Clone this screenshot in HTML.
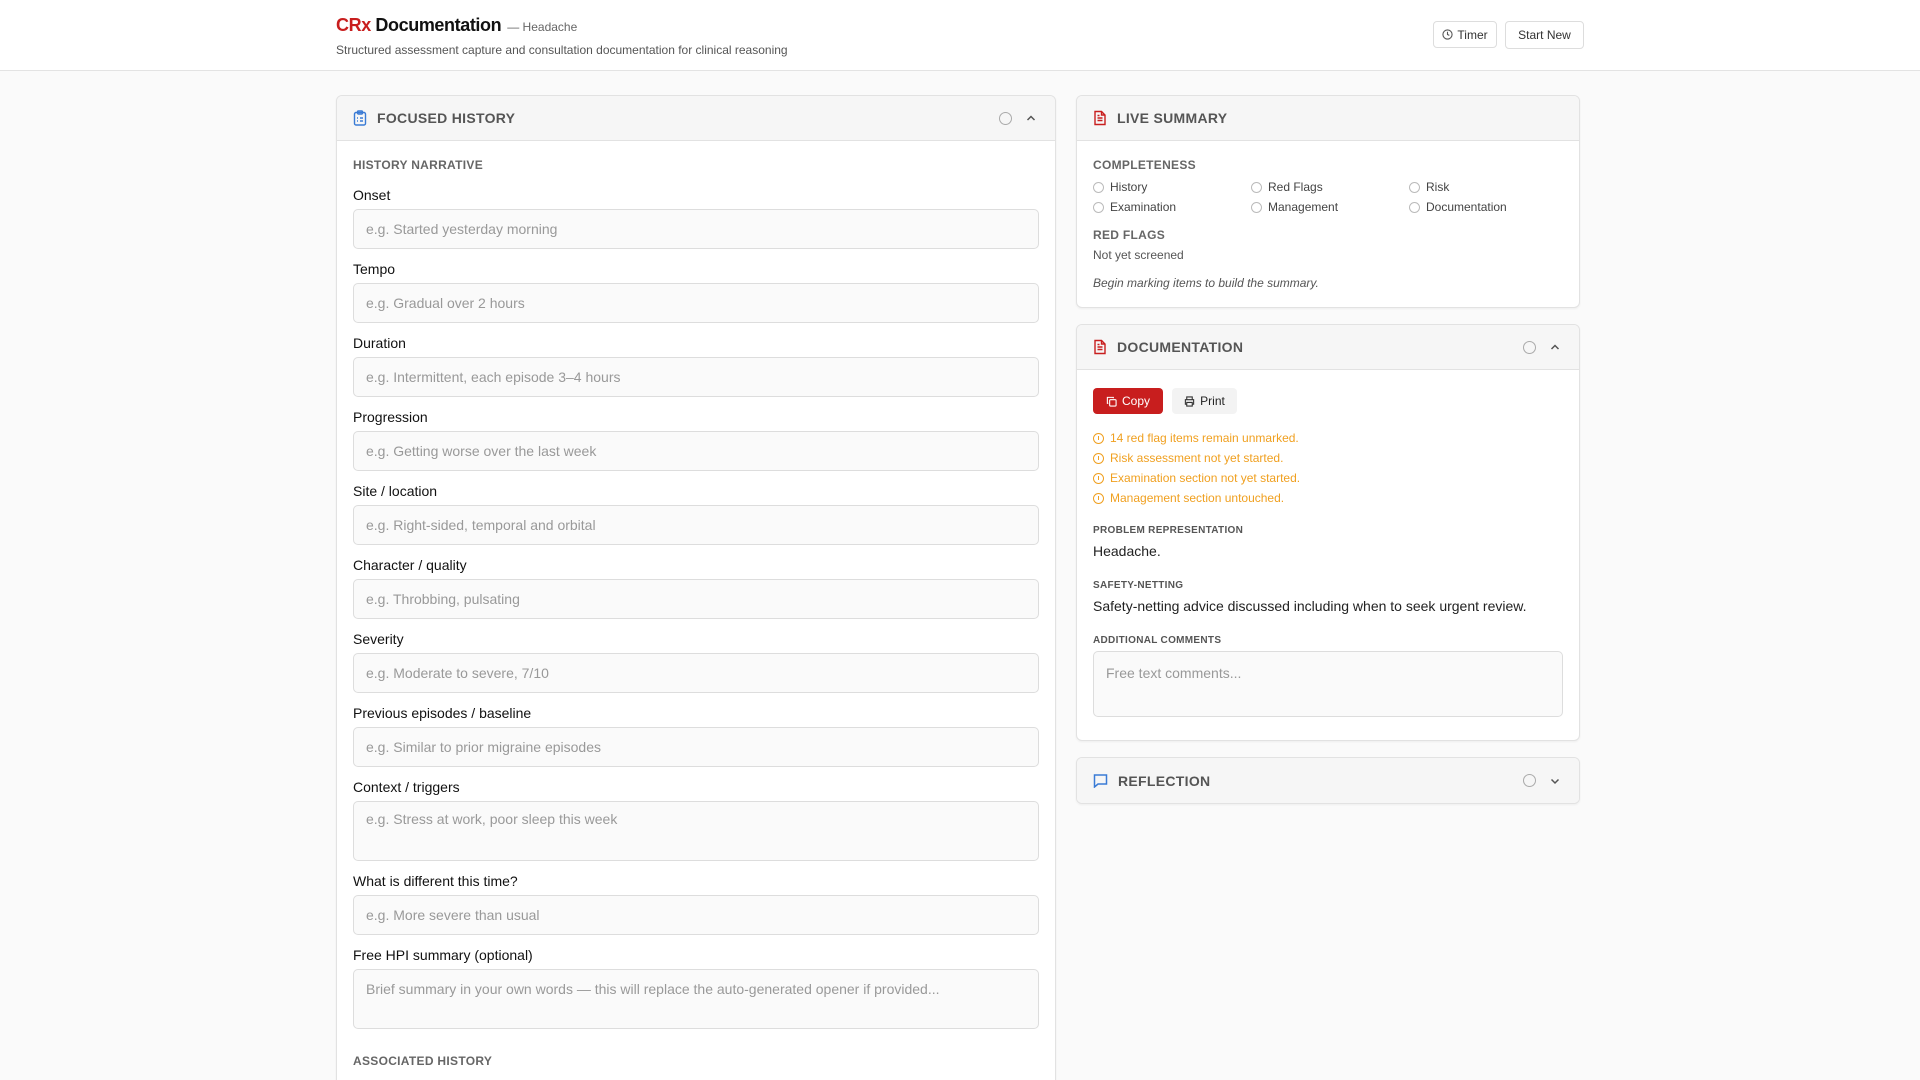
<!DOCTYPE html>
<html><head><meta charset="utf-8"><style>
*{box-sizing:border-box;margin:0;padding:0}
html{width:1920px;height:1080px;overflow:hidden}
body{width:1920px;height:1080px;overflow:hidden;background:#fafafa;font-family:"Liberation Sans",Arial,sans-serif;color:#111;position:relative}
.hdr{position:absolute;left:0;top:0;width:1920px;height:71px;background:#fff;border-bottom:1px solid #e3e3e3}
.abs{position:absolute}
.title{left:336px;top:15px;font-size:18px;font-weight:bold;letter-spacing:-0.4px}
.title .r{color:#c81e1e}
.title .h{font-size:12px;font-weight:normal;color:#666;margin-left:6px;letter-spacing:0}
.sub{left:336px;top:43px;font-size:12px;color:#555}
.btn{position:absolute;border:1px solid #ddd;border-radius:4px;background:#fff;font-size:12px;color:#333;display:flex;align-items:center;justify-content:center;gap:4px}
.card{position:absolute;background:#fff;border:1px solid #e2e2e2;border-radius:6px;overflow:hidden;box-shadow:0 1px 2px rgba(0,0,0,.05)}
.ch{height:45px;background:#f6f6f6;border-bottom:1px solid #e2e2e2;display:flex;align-items:center;padding:0 16px;font-size:14px;font-weight:bold;color:#555;letter-spacing:.3px}
.ch svg{margin-right:10px}
.ch .rt{margin-left:auto;display:flex;align-items:center;gap:13px;margin-right:2px}
.ch .rt svg{margin-right:0}
.circ{width:13px;height:13px;border:1.5px solid #aaa;border-radius:50%}
.sec{font-size:12px;font-weight:bold;color:#666;letter-spacing:.3px}
.lbl{font-size:14px;color:#111}
.inp{position:absolute;left:16px;width:686px;height:40px;border:1px solid #ddd;border-radius:5px;background:#fafafa;font-size:14px;color:#999;padding:11px 12px}
.ta{padding-top:9px}
.ck{display:flex;align-items:center;gap:6px;font-size:12px;color:#444;position:absolute}
.ck i{width:11px;height:11px;border:1px solid #bbb;border-radius:50%;display:inline-block}
.w{position:absolute;left:16px;font-size:12px;color:#f0a020;display:flex;align-items:center;gap:6px}
.w i{width:11px;height:11px;border:1.3px solid #f0a020;border-radius:50%;display:inline-block;position:relative}
.w i:after{content:"";position:absolute;left:3.5px;top:2px;width:1.3px;height:4px;background:#f0a020}
.sl{font-size:10px;font-weight:bold;color:#555;letter-spacing:.3px}
</style></head><body>
<div class="hdr">
<div class="abs title"><span class="r">CRx</span> Documentation<span class="h">— Headache</span></div>
<div class="abs sub">Structured assessment capture and consultation documentation for clinical reasoning</div>
<div class="btn" style="left:1433px;top:21px;width:64px;height:27px"><svg width="11" height="11" viewBox="0 0 12 12"><circle cx="6" cy="6" r="5" fill="none" stroke="#555" stroke-width="1.2"/><path d="M6 3v3l2 1" stroke="#555" fill="none" stroke-width="1.2"/></svg>Timer</div>
<div class="btn" style="left:1505px;top:21px;width:79px;height:28px">Start New</div>
</div>

<div class="card" style="left:336px;top:95px;width:720px;height:995px;border-bottom-left-radius:0;border-bottom-right-radius:0">
<div class="ch"><svg width="14" height="16" viewBox="0 0 14 16" fill="none" stroke="#3a7bd5" stroke-width="1.4"><rect x="1.5" y="2.5" width="11" height="12.5" rx="1.5"/><rect x="4.5" y="1" width="5" height="3" rx="1"/><path d="M4 8h1M7 8h3M4 11h1M7 11h3"/></svg>FOCUSED HISTORY<div class="rt"><span class="circ"></span><svg width="12" height="12" viewBox="0 0 12 12"><path d="M2.5 8l3.5-3.5L9.5 8" fill="none" stroke="#555" stroke-width="1.5"/></svg></div></div>
<div class="abs sec" style="left:16px;top:62px">HISTORY NARRATIVE</div>
<div class="abs lbl" style="left:16px;top:91px">Onset</div><div class="inp" style="top:113px">e.g. Started yesterday morning</div>
<div class="abs lbl" style="left:16px;top:165px">Tempo</div><div class="inp" style="top:187px">e.g. Gradual over 2 hours</div>
<div class="abs lbl" style="left:16px;top:239px">Duration</div><div class="inp" style="top:261px">e.g. Intermittent, each episode 3–4 hours</div>
<div class="abs lbl" style="left:16px;top:313px">Progression</div><div class="inp" style="top:335px">e.g. Getting worse over the last week</div>
<div class="abs lbl" style="left:16px;top:387px">Site / location</div><div class="inp" style="top:409px">e.g. Right-sided, temporal and orbital</div>
<div class="abs lbl" style="left:16px;top:461px">Character / quality</div><div class="inp" style="top:483px">e.g. Throbbing, pulsating</div>
<div class="abs lbl" style="left:16px;top:535px">Severity</div><div class="inp" style="top:557px">e.g. Moderate to severe, 7/10</div>
<div class="abs lbl" style="left:16px;top:609px">Previous episodes / baseline</div><div class="inp" style="top:631px">e.g. Similar to prior migraine episodes</div>
<div class="abs lbl" style="left:16px;top:683px">Context / triggers</div><div class="inp ta" style="top:705px;height:60px">e.g. Stress at work, poor sleep this week</div>
<div class="abs lbl" style="left:16px;top:777px">What is different this time?</div><div class="inp" style="top:799px">e.g. More severe than usual</div>
<div class="abs lbl" style="left:16px;top:851px">Free HPI summary (optional)</div><div class="inp ta" style="top:873px;height:60px;padding-top:11px">Brief summary in your own words — this will replace the auto-generated opener if provided...</div>
<div class="abs sec" style="left:16px;top:958px">ASSOCIATED HISTORY</div>
</div>

<div class="card" style="left:1076px;top:95px;width:504px;height:213px">
<div class="ch"><svg width="14" height="16" viewBox="0 0 14 16" fill="none" stroke="#c81e1e" stroke-width="1.4"><path d="M2 1.5h6.5l3.5 3.5v9.5H2z"/><path d="M8.5 1.5V5H12M4.5 8h5M4.5 10.5h5M4.5 5.5h2"/></svg>LIVE SUMMARY</div>
<div class="abs sec" style="left:16px;top:62px">COMPLETENESS</div>
<div class="ck" style="left:16px;top:84px"><i></i>History</div><div class="ck" style="left:174px;top:84px"><i></i>Red Flags</div><div class="ck" style="left:332px;top:84px"><i></i>Risk</div>
<div class="ck" style="left:16px;top:104px"><i></i>Examination</div><div class="ck" style="left:174px;top:104px"><i></i>Management</div><div class="ck" style="left:332px;top:104px"><i></i>Documentation</div>
<div class="abs sec" style="left:16px;top:132px">RED FLAGS</div>
<div class="abs" style="left:16px;top:152px;font-size:12px;color:#555">Not yet screened</div>
<div class="abs" style="left:16px;top:180px;font-size:12px;color:#555;font-style:italic">Begin marking items to build the summary.</div>
</div>

<div class="card" style="left:1076px;top:324px;width:504px;height:417px">
<div class="ch"><svg width="14" height="16" viewBox="0 0 14 16" fill="none" stroke="#c81e1e" stroke-width="1.4"><path d="M2 1.5h6.5l3.5 3.5v9.5H2z"/><path d="M8.5 1.5V5H12M4.5 8h5M4.5 10.5h5M4.5 5.5h2"/></svg>DOCUMENTATION<div class="rt"><span class="circ"></span><svg width="12" height="12" viewBox="0 0 12 12"><path d="M2.5 8l3.5-3.5L9.5 8" fill="none" stroke="#555" stroke-width="1.5"/></svg></div></div>
<div class="abs" style="left:16px;top:63px;width:70px;height:26px;background:#c81e1e;border-radius:4px;color:#fff;font-size:12px;display:flex;align-items:center;justify-content:center;gap:5px"><svg width="11" height="11" viewBox="0 0 12 12" fill="none" stroke="#fff" stroke-width="1.2"><rect x="4" y="4" width="7" height="7" rx="1"/><path d="M8 2.5V1.5H1.5V8h1"/></svg>Copy</div>
<div class="abs" style="left:95px;top:63px;width:65px;height:26px;background:#f3f3f3;border-radius:4px;color:#222;font-size:12px;display:flex;align-items:center;justify-content:center;gap:5px"><svg width="11" height="11" viewBox="0 0 12 12" fill="none" stroke="#333" stroke-width="1.2"><path d="M3 4V1h6v3M3 9H1.5V4h9v5H9M3 7h6v4H3z"/></svg>Print</div>
<div class="w" style="top:106px"><i></i>14 red flag items remain unmarked.</div>
<div class="w" style="top:126px"><i></i>Risk assessment not yet started.</div>
<div class="w" style="top:146px"><i></i>Examination section not yet started.</div>
<div class="w" style="top:166px"><i></i>Management section untouched.</div>
<div class="abs sl" style="left:16px;top:200px">PROBLEM REPRESENTATION</div>
<div class="abs" style="left:16px;top:218px;font-size:14px;color:#222">Headache.</div>
<div class="abs sl" style="left:16px;top:255px">SAFETY-NETTING</div>
<div class="abs" style="left:16px;top:273px;font-size:14px;color:#222">Safety-netting advice discussed including when to seek urgent review.</div>
<div class="abs sl" style="left:16px;top:310px">ADDITIONAL COMMENTS</div>
<div class="abs" style="left:16px;top:326px;width:470px;height:66px;border:1px solid #ddd;border-radius:5px;background:#fafafa;font-size:14px;color:#999;padding:13px 12px">Free text comments...</div>
</div>

<div class="card" style="left:1076px;top:757px;width:504px;height:47px">
<div class="ch" style="border-bottom:none;height:45px"><svg width="15" height="15" viewBox="0 0 15 15" fill="none" stroke="#3a7bd5" stroke-width="1.5"><path d="M1.5 2h12v9H5l-3.5 3z"/></svg>REFLECTION<div class="rt"><span class="circ"></span><svg width="12" height="12" viewBox="0 0 12 12"><path d="M2.5 4.5L6 8l3.5-3.5" fill="none" stroke="#555" stroke-width="1.5"/></svg></div></div>
</div>
</body></html>
